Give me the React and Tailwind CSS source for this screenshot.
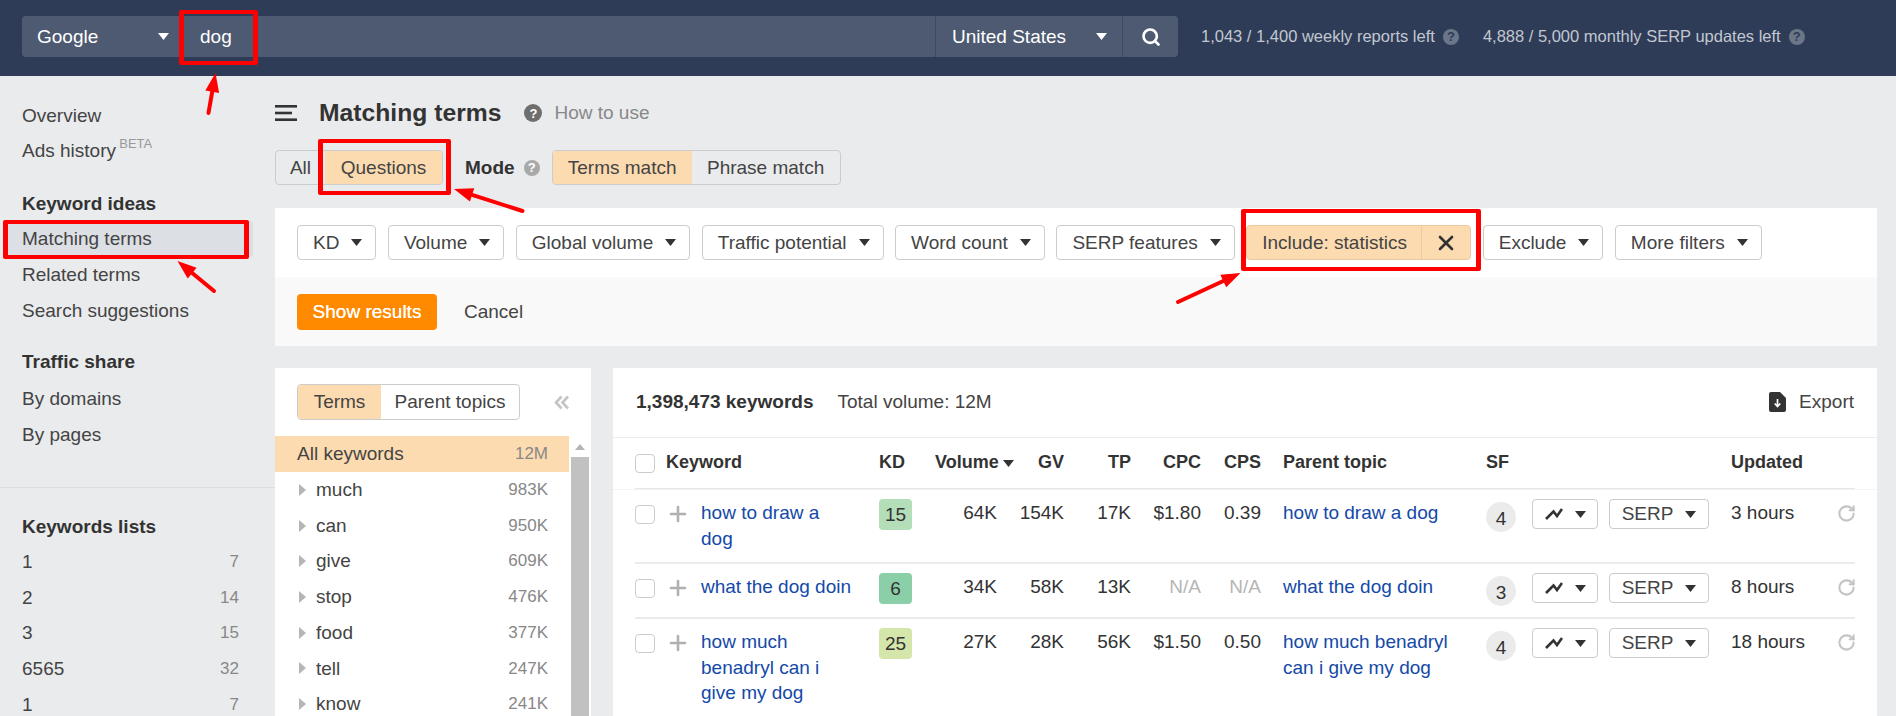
import { Search, X, Plus, RotateCw } from "lucide-react";

const rowGrid =
  "grid grid-cols-[244px_56px_79px_50px_67px_70px_60px_225px_46px_77px_122px_106px_18px]";

const sidebarMain = ["Overview"];
const keywordIdeas = ["Related terms", "Search suggestions"];
const lists = [
  ["1", "7"],
  ["2", "14"],
  ["3", "15"],
  ["6565", "32"],
  ["1", "7"],
];
const terms = [
  ["much", "983K"],
  ["can", "950K"],
  ["give", "609K"],
  ["stop", "476K"],
  ["food", "377K"],
  ["tell", "247K"],
  ["know", "241K"],
];
const filters = [
  "KD",
  "Volume",
  "Global volume",
  "Traffic potential",
  "Word count",
  "SERP features",
];
const rows = [
  {
    kw: ["how to draw a", "dog"],
    kd: "15",
    kdClass: "bg-[#b3deb8]",
    vol: "64K",
    gv: "154K",
    tp: "17K",
    cpc: "$1.80",
    cps: "0.39",
    parent: ["how to draw a dog"],
    sf: "4",
    updated: "3 hours",
    height: "h-[74px]",
  },
  {
    kw: ["what the dog doin"],
    kd: "6",
    kdClass: "bg-[#8bcfa8]",
    vol: "34K",
    gv: "58K",
    tp: "13K",
    cpc: "N/A",
    cps: "N/A",
    parent: ["what the dog doin"],
    sf: "3",
    updated: "8 hours",
    height: "h-[55px]",
  },
  {
    kw: ["how much", "benadryl can i", "give my dog"],
    kd: "25",
    kdClass: "bg-[#d4e6a9]",
    vol: "27K",
    gv: "28K",
    tp: "56K",
    cpc: "$1.50",
    cps: "0.50",
    parent: ["how much benadryl", "can i give my dog"],
    sf: "4",
    updated: "18 hours",
    height: "h-[110px]",
  },
];

function Caret({ className = "fill-[#333]" }) {
  return (
    <svg width="11" height="7" viewBox="0 0 11 7" className={`shrink-0 ${className}`}>
      <path d="M0 0h11L5.5 7z" />
    </svg>
  );
}

function Help({ className }) {
  return (
    <span
      className={`inline-flex h-4 w-4 shrink-0 items-center justify-center rounded-full text-[13px] font-bold leading-none ${className}`}
    >
      ?
    </span>
  );
}

function FilterButton({ label }) {
  return (
    <button className="flex h-[35px] shrink-0 items-center gap-[12px] rounded-[4px] border border-[#ccc] bg-white pl-[15px] pr-[13px] text-[19px] text-[#444]">
      {label}
      <Caret />
    </button>
  );
}

function TrendIcon() {
  return (
    <svg width="18" height="12" viewBox="0 0 18 12" fill="none" stroke="#333" strokeWidth="2.6">
      <path d="M1 11l7.5-7.5L12 8l5-7" />
    </svg>
  );
}

function ExportIcon() {
  return (
    <svg width="17" height="20" viewBox="0 0 17 20">
      <path d="M2 0h9l6 6v12a2 2 0 0 1-2 2H2a2 2 0 0 1-2-2V2a2 2 0 0 1 2-2z" fill="#333" />
      <path d="M8.5 7v7M5.7 11.5l2.8 3 2.8-3" fill="none" stroke="#fff" strokeWidth="1.7" />
    </svg>
  );
}

function RedBox({ className }) {
  return (
    <div
      className={`pointer-events-none absolute rounded-[2px] border-y-4 border-x-[5px] border-[#fe0000] ${className}`}
    />
  );
}

function Arrow({ tail, tip }) {
  const dx = tip[0] - tail[0];
  const dy = tip[1] - tail[1];
  const len = Math.hypot(dx, dy);
  const ux = dx / len;
  const uy = dy / len;
  const bx = tip[0] - ux * 19;
  const by = tip[1] - uy * 19;
  const points = [
    `${tip[0]},${tip[1]}`,
    `${bx - uy * 7},${by + ux * 7}`,
    `${bx + uy * 7},${by - ux * 7}`,
  ].join(" ");
  return (
    <g>
      <line x1={tail[0]} y1={tail[1]} x2={bx} y2={by} stroke="#fe0000" strokeWidth="4" strokeLinecap="round" />
      <polygon points={points} fill="#fe0000" />
    </g>
  );
}

function KeywordRow({ row }) {
  const na = row.cpc === "N/A";
  return (
    <div className={`${rowGrid} ${row.height} items-start border-b-2 border-[#ebebeb] pt-[9px]`}>
      <div className="flex">
        <span className="mt-[6px] h-[19px] w-[20px] shrink-0 rounded-[4px] border border-[#ccc]" />
        <Plus size={24} strokeWidth={2.6} className="ml-[11px] mt-[3px] shrink-0 text-[#b0b0b0]" />
        <a className="ml-[11px] whitespace-nowrap pt-[1px] text-[#1449a8]">
          {row.kw.map((line) => (
            <div key={line}>{line}</div>
          ))}
        </a>
      </div>
      <div className={`flex h-[31px] w-[33px] items-center justify-center rounded-[4px] ${row.kdClass}`}>
        {row.kd}
      </div>
      <div className="pr-[17px] pt-[1px] text-right">{row.vol}</div>
      <div className="pt-[1px] text-right">{row.gv}</div>
      <div className="pt-[1px] text-right">{row.tp}</div>
      <div className={`pt-[1px] text-right ${na ? "text-[#b5b5b5]" : ""}`}>{row.cpc}</div>
      <div className={`pt-[1px] text-right ${na ? "text-[#b5b5b5]" : ""}`}>{row.cps}</div>
      <a className="whitespace-nowrap pl-[22px] pt-[1px] text-[#1449a8]">
        {row.parent.map((line) => (
          <div key={line}>{line}</div>
        ))}
      </a>
      <div className="mt-[3px] flex h-[30px] w-[30px] items-center justify-center rounded-full bg-[#ebebeb] pt-[3px]">
        {row.sf}
      </div>
      <button className="flex h-[30px] w-[66px] items-center justify-center gap-[12px] rounded-[4px] border border-[#ccc]">
        <TrendIcon />
        <Caret />
      </button>
      <button className="flex h-[30px] w-[100px] items-center justify-center gap-[12px] rounded-[4px] border border-[#ccc] text-[#444]">
        SERP
        <Caret />
      </button>
      <div className="pt-[1px]">{row.updated}</div>
      <RotateCw size={19} strokeWidth={2.6} className="mt-[5px] text-[#c4c4c4]" />
    </div>
  );
}

export default function App() {
  return (
    <div className="relative h-[716px] w-full overflow-hidden bg-[#eaebed] font-['Liberation_Sans',Arial,sans-serif] text-[19px] leading-[25.5px] text-[#333]">
      <header className="flex h-[76px] items-start bg-[#2e3c57] pl-[22px] pt-[16px] text-white">
        <div className="flex h-[41px] w-[1156px] items-center rounded-[4px] bg-[#4d5a72]">
          <div className="flex w-[158px] items-center justify-between pl-[15px] pr-[11px]">
            Google
            <Caret className="fill-white" />
          </div>
          <div className="flex-1 pl-[20px]">dog</div>
          <div className="flex h-full w-[187px] items-center justify-between border-l border-[#3c4961] pl-[16px] pr-[15px]">
            United States
            <Caret className="fill-white" />
          </div>
          <div className="flex h-full w-[56px] items-center justify-center border-l border-[#3c4961]">
            <Search size={20} strokeWidth={3.2} />
          </div>
        </div>
        <div className="ml-[23px] flex h-[41px] items-center text-[16.5px] text-[#c2c7d0]">
          1,043 / 1,400 weekly reports left
          <Help className="ml-[8px] bg-[#6b7689] text-[#2e3c57]" />
          <span className="ml-[24px]">4,888 / 5,000 monthly SERP updates left</span>
          <Help className="ml-[8px] bg-[#6b7689] text-[#2e3c57]" />
        </div>
      </header>

      <div className="flex">
        <aside className="w-[275px] shrink-0 pl-[22px] pr-[22px] pt-[22px] text-[#444]">
          {sidebarMain.map((item) => (
            <div key={item} className="h-9 leading-9">
              {item}
            </div>
          ))}
          <div className="h-[34px] leading-[34px]">
            Ads history <sup className="-ml-[2px] align-[3px] text-[13px] leading-none text-[#999]">BETA</sup>
          </div>
          <div className="mt-[18px] h-[35px] font-bold leading-9 text-[#333]">Keyword ideas</div>
          <div className="-ml-[18px] h-9 rounded-[3px] bg-[#dcdfe4] pl-[18px] leading-9">Matching terms</div>
          {keywordIdeas.map((item) => (
            <div key={item} className="h-9 leading-9">
              {item}
            </div>
          ))}
          <div className="mt-[15px] h-[37px] font-bold leading-9 text-[#333]">Traffic share</div>
          <div className="h-9 leading-9">By domains</div>
          <div className="h-9 leading-9">By pages</div>
          <div className="-ml-[22px] -mr-[22px] mt-[34px] border-t border-[#dcdde0]" />
          <div className="mt-[21px] h-[35px] font-bold leading-9 text-[#333]">Keywords lists</div>
          {lists.map(([name, count], i) => (
            <div key={i} className="flex h-[35.7px] items-center justify-between pr-[14px]">
              {name}
              <span className="text-[17px] text-[#888]">{count}</span>
            </div>
          ))}
        </aside>

        <main className="w-[1602px] shrink-0">
          <div className="mt-[19px] flex h-9 items-center">
            <svg width="22" height="16" viewBox="0 0 22 16" fill="#333">
              <rect width="22" height="2.6" />
              <rect y="6.7" width="17" height="2.6" />
              <rect y="13.4" width="22" height="2.6" />
            </svg>
            <h1 className="ml-[22px] text-[24.7px] font-bold">Matching terms</h1>
            <Help className="ml-[23px] !h-[18px] !w-[18px] bg-[#6e6e6e] text-white" />
            <span className="ml-[12px] text-[#888]">How to use</span>
          </div>

          <div className="mt-[19px] flex h-[35px] items-center">
            <div className="flex h-full rounded-[4px] border border-[#ccc]">
              <div className="flex w-[49px] items-center justify-center text-[#444]">All</div>
              <div className="flex w-[117px] items-center justify-center rounded-r-[3px] bg-[#fddbb0] text-[#444]">
                Questions
              </div>
            </div>
            <span className="ml-[22px] font-bold">Mode</span>
            <Help className="ml-[9px] bg-[#a9a9a9] text-white" />
            <div className="ml-[12px] flex h-full rounded-[4px] border border-[#ccc]">
              <div className="flex w-[139px] items-center justify-center rounded-l-[3px] bg-[#fddbb0] text-[#444]">
                Terms match
              </div>
              <div className="flex w-[148px] items-center justify-center text-[#444]">Phrase match</div>
            </div>
          </div>

          <section className="mt-[23px]">
            <div className="flex h-[69px] items-center gap-[11.5px] bg-white pl-[22px]">
              {filters.map((f) => (
                <FilterButton key={f} label={f} />
              ))}
              <div className="flex h-[35px] w-[225px] shrink-0 rounded-[4px] border border-[#eec9a0] bg-[#fddbb0] text-[#444]">
                <div className="flex flex-1 items-center pl-[15px]">Include: statistics</div>
                <div className="flex w-[49px] items-center justify-center border-l border-[#f0c99e]">
                  <X size={24} strokeWidth={2.6} className="text-[#333]" />
                </div>
              </div>
              <FilterButton label="Exclude" />
              <FilterButton label="More filters" />
            </div>
            <div className="flex h-[69px] items-center bg-[#f9f9f9] pl-[22px]">
              <button className="flex h-9 w-[140px] items-center justify-center rounded-[4px] bg-[#ff8a00] text-white [text-shadow:0_0_0.6px_white]">
                Show results
              </button>
              <span className="ml-[27px] text-[#444]">Cancel</span>
            </div>
          </section>

          <div className="mt-[22px] flex h-[348px] gap-[22px] overflow-hidden">
            <section className="w-[316px] shrink-0 bg-white">
              <div className="flex h-[68px] items-center pl-[22px]">
                <div className="flex h-9 rounded-[4px] border border-[#ccc] text-[#444]">
                  <div className="flex w-[83px] items-center justify-center rounded-l-[3px] bg-[#fddbb0]">Terms</div>
                  <div className="flex w-[138px] items-center justify-center">Parent topics</div>
                </div>
                <svg width="16" height="15" viewBox="0 0 16 15" fill="none" stroke="#c4c4c4" strokeWidth="2.6" className="ml-[34px]">
                  <path d="M7.5 1.5L2 7.5l5.5 6M14 1.5l-5.5 6 5.5 6" />
                </svg>
              </div>
              <div className="flex">
                <div className="w-[294px] shrink-0">
                  <div className="flex h-9 items-center justify-between bg-[#fddbb0] pl-[22px] pr-[21px] text-[#444]">
                    All keywords
                    <span className="text-[17px] text-[#888]">12M</span>
                  </div>
                  {terms.map(([term, value]) => (
                    <div key={term} className="flex h-[35.7px] items-center pl-[24px] pr-[21px] text-[#444]">
                      <svg width="7" height="12" viewBox="0 0 7 12" fill="#b5b5b5">
                        <path d="M0 0l7 6-7 6z" />
                      </svg>
                      <span className="ml-[10px] flex-1">{term}</span>
                      <span className="text-[17px] text-[#888]">{value}</span>
                    </div>
                  ))}
                </div>
                <div className="ml-[2px] w-[18px]">
                  <svg width="18" height="21" viewBox="0 0 18 21" fill="#b5b5b5">
                    <path d="M9 8l5 6H4z" />
                  </svg>
                  <div className="h-[300px] bg-[#c1c1c1]" />
                </div>
              </div>
            </section>

            <section className="w-[1264px] shrink-0 bg-white">
              <div className="flex h-[70px] items-center justify-between border-b border-[#ebebeb] pb-[2px] pl-[23px] pr-[23px]">
                <div>
                  <span className="font-bold">1,398,473 keywords</span>
                  <span className="ml-[24px] text-[#444]">Total volume: 12M</span>
                </div>
                <div className="flex items-center gap-[13px] text-[#444]">
                  <ExportIcon />
                  Export
                </div>
              </div>
              <div className="border-b border-[#f3f3f3]">
                <div className={`${rowGrid} mx-[22px] h-[51px] items-center border-b border-[#e6e6e6] text-[18px] font-bold`}>
                  <div className="flex items-center">
                    <span className="h-[19px] w-[20px] rounded-[4px] border border-[#ccc]" />
                    <span className="ml-[11px]">Keyword</span>
                  </div>
                  <div>KD</div>
                  <div className="flex items-center gap-[4px]">
                    Volume
                    <Caret />
                  </div>
                  <div className="text-right">GV</div>
                  <div className="text-right">TP</div>
                  <div className="text-right">CPC</div>
                  <div className="text-right">CPS</div>
                  <div className="pl-[22px]">Parent topic</div>
                  <div>SF</div>
                  <div />
                  <div />
                  <div>Updated</div>
                  <div />
                </div>
              </div>
              <div className="mx-[22px]">
                {rows.map((row) => (
                  <KeywordRow key={row.kd} row={row} />
                ))}
              </div>
            </section>
          </div>
        </main>
      </div>

      <RedBox className="left-[179px] top-[10px] h-[55px] w-[79px]" />
      <RedBox className="left-[318px] top-[139px] h-[56px] w-[133px]" />
      <RedBox className="left-[3px] top-[220px] h-[39px] w-[246px]" />
      <RedBox className="left-[1241px] top-[209px] h-[62px] w-[240px]" />
      <svg className="pointer-events-none absolute left-0 top-0" width="1896" height="716">
        <Arrow tail={[208.5, 113]} tip={[215.5, 73]} />
        <Arrow tail={[522.5, 211]} tip={[454, 189]} />
        <Arrow tail={[214, 291]} tip={[177.5, 261]} />
        <Arrow tail={[1178, 302]} tip={[1240.5, 273]} />
      </svg>
    </div>
  );
}
